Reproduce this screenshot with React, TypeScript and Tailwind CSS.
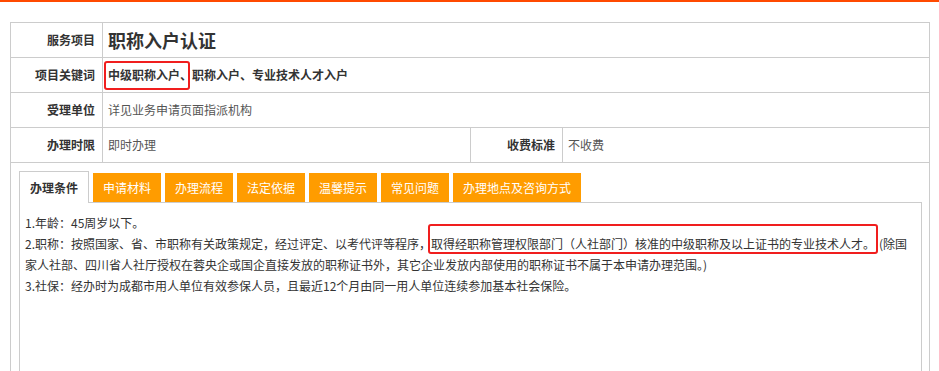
import React from 'react';

const tabs = ['申请材料', '办理流程', '法定依据', '温馨提示', '常见问题', '办理地点及咨询方式'];

export default function App() {
  return (
    <div className="min-h-screen bg-white text-[12px] text-[#333] font-['Microsoft_YaHei','Noto_Sans_CJK_SC',sans-serif]">
      {/* top bar */}
      <div className="h-[2px] bg-[#ff4a00]" />

      <div className="ml-[10px] mt-[20px] w-[920px] border border-[#ccc]">
        {/* 服务项目 */}
        <div className="flex h-[35px] border-b border-[#ccc]">
          <div className="w-[92px] shrink-0 border-r border-[#ccc] flex items-center justify-end pr-[7px] font-bold">服务项目</div>
          <div className="flex-1 flex items-center pl-[5px] text-[18px] font-bold leading-none">职称入户认证</div>
        </div>

        {/* 项目关键词 */}
        <div className="flex h-[35px] border-b border-[#ccc]">
          <div className="w-[92px] shrink-0 border-r border-[#ccc] flex items-center justify-end pr-[7px] font-bold">项目关键词</div>
          <div className="relative flex-1 flex items-center pl-[5px] font-bold">
            中级职称入户、职称入户、专业技术人才入户
            <div className="absolute left-[1px] top-[3px] w-[86px] h-[29px] border-2 border-[#f01e1e] rounded-[3px]" />
          </div>
        </div>

        {/* 受理单位 */}
        <div className="flex h-[35px] border-b border-[#ccc]">
          <div className="w-[92px] shrink-0 border-r border-[#ccc] flex items-center justify-end pr-[7px] font-bold">受理单位</div>
          <div className="flex-1 flex items-center pl-[5px] text-[#555]">详见业务申请页面指派机构</div>
        </div>

        {/* 办理时限 / 收费标准 */}
        <div className="flex h-[35px] border-b border-[#ccc]">
          <div className="w-[92px] shrink-0 border-r border-[#ccc] flex items-center justify-end pr-[7px] font-bold">办理时限</div>
          <div className="w-[368px] shrink-0 border-r border-[#ccc] flex items-center pl-[5px] text-[#555]">即时办理</div>
          <div className="w-[92px] shrink-0 border-r border-[#ccc] flex items-center justify-end pr-[7px] font-bold">收费标准</div>
          <div className="flex-1 flex items-center pl-[5px] text-[#555]">不收费</div>
        </div>

        {/* tabs */}
        <div className="pl-[8px] pr-[7px] pt-[8px]">
          <div className="flex items-end gap-[4px]">
            <div className="relative z-10 -mb-px h-[32px] px-[10px] flex items-center bg-white border border-b-0 border-[#ccc] font-bold">办理条件</div>
            {tabs.map(t => (
              <div key={t} className="h-[29px] px-[10px] flex items-center bg-[#ff9c00] text-white">{t}</div>
            ))}
          </div>

          <div className="relative h-[200px] border border-[#ccc] pl-[5px] pr-[5px] pt-[9px] leading-[21px]">
            <p>1.年龄：45周岁以下。</p>
            <p>
              2.职称：按照国家、省、市职称有关政策规定，经过评定、以考代评等程序，取得经职称管理权限部门（人社部门）核准的中级职称及以上证书的专业技术人才。
              <span className="ml-[4px]">(除国家人社部、四川省人社厅授权在蓉央企或国企直接发放的职称证书外，其它企业发放内部使用的职称证书不属于本申请办理范围。)</span>
            </p>
            <p>3.社保：经办时为成都市用人单位有效参保人员，且最近12个月由同一用人单位连续参加基本社会保险。</p>
            <div className="absolute left-[408px] top-[21px] w-[450px] h-[30px] border-2 border-[#f01e1e] rounded-[3px]" />
          </div>
        </div>
      </div>
    </div>
  );
}
